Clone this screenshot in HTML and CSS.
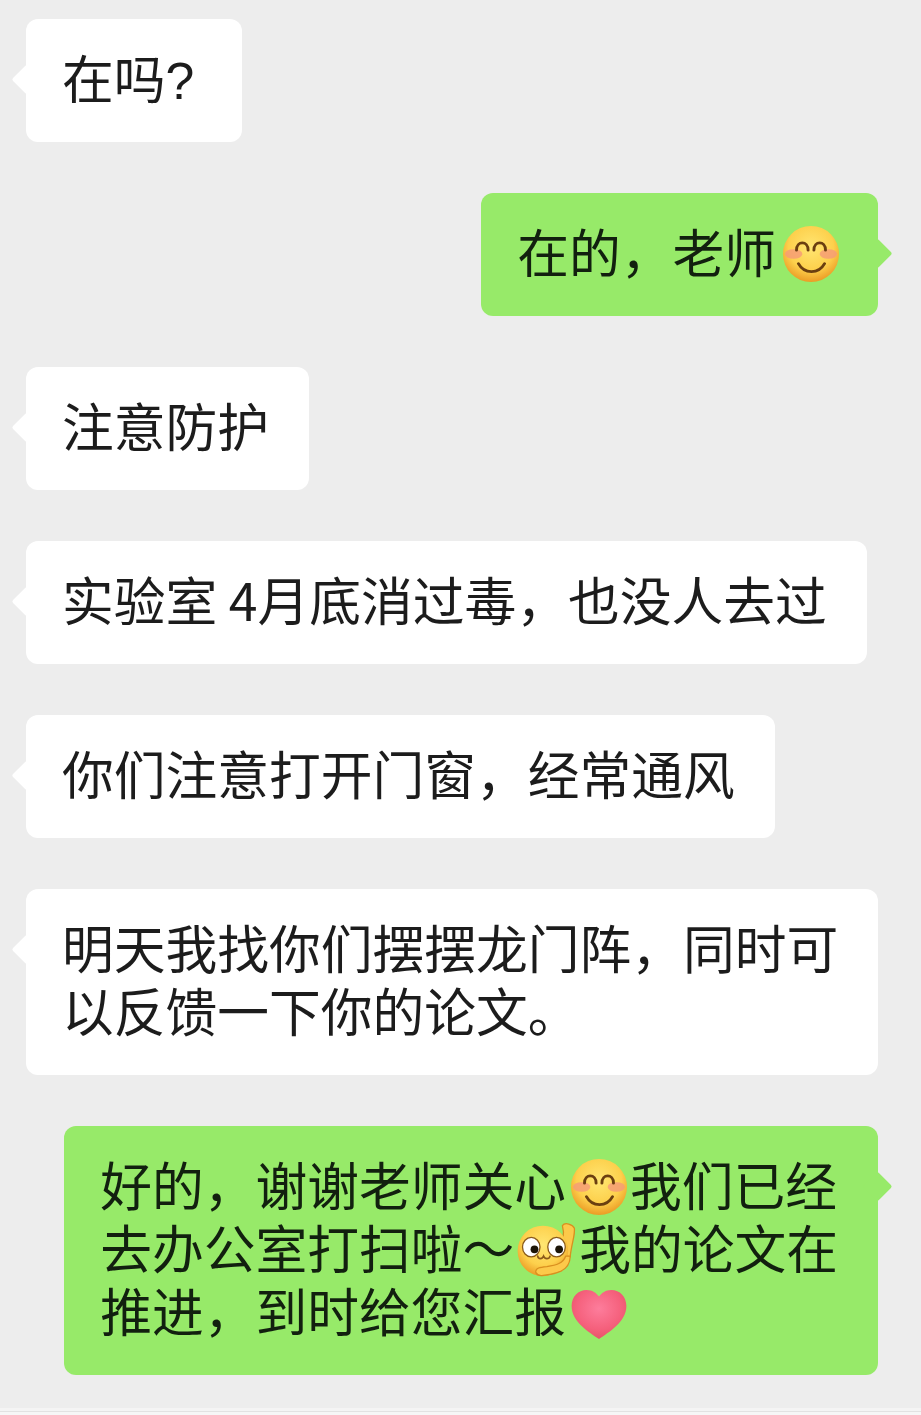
FILE: index.html
```html
<!DOCTYPE html>
<html lang="zh-CN">
<head>
    <meta charset="UTF-8">
    <title>聊天记录</title>
    <link rel="stylesheet" href="styles.css">
</head>
<body>
<svg class="defs" width="0" height="0">
    <defs>
        <radialGradient id="faceFill" cx="50%" cy="38%" r="62%">
            <stop offset="0" stop-color="#ffe672"/>
            <stop offset="0.65" stop-color="#fdd04c"/>
            <stop offset="1" stop-color="#eb9c25"/>
        </radialGradient>
        <radialGradient id="heartFill" cx="50%" cy="38%" r="60%">
            <stop offset="0" stop-color="#fd7d9c"/>
            <stop offset="0.7" stop-color="#f5607c"/>
            <stop offset="1" stop-color="#e8566a"/>
        </radialGradient>
        <symbol id="smile" viewBox="0 0 60 60">
            <circle cx="30" cy="30" r="29" fill="url(#faceFill)"/>
            <ellipse cx="12" cy="30" rx="9" ry="5" fill="#f59a78" opacity=".8"/>
            <ellipse cx="48" cy="30" rx="9" ry="5" fill="#f59a78" opacity=".8"/>
            <path d="M15 26c0-10 12-10 12 0M33 26c0-10 12-10 12 0M17 40c6 11 21 11 27 0" fill="none" stroke="#6b3f10" stroke-width="3" stroke-linecap="round"/>
        </symbol>
        <symbol id="think" viewBox="25 22 185 174">
            <path d="M168 34C176 22 200 30 205 42C208 62 196 90 192 130L150 120C170 90 176 60 168 34z" fill="#fcc94a" stroke="#d98f1f" stroke-width="4" stroke-linejoin="round"/>
            <circle cx="108" cy="112" r="78" fill="url(#faceFill)"/>
            <ellipse cx="72" cy="100" rx="27" ry="30" fill="#fff" stroke="#8a5a1a" stroke-width="4"/>
            <ellipse cx="150" cy="100" rx="27" ry="30" fill="#fff" stroke="#8a5a1a" stroke-width="4"/>
            <circle cx="82" cy="107" r="12" fill="#1c1508"/>
            <circle cx="158" cy="107" r="12" fill="#1c1508"/>
            <path d="M92 128c1 10 14 10 18 0c4 10 17 10 20 0" fill="none" stroke="#8a5a1a" stroke-width="5" stroke-linecap="round"/>
            <path d="M192 128C192 160 170 178 130 184C110 188 92 192 86 178C84 164 100 162 120 160C150 156 170 150 178 128z" fill="#fcc94a" stroke="#d98f1f" stroke-width="4" stroke-linejoin="round"/>
        </symbol>
        <symbol id="heart" viewBox="0 0 60 54">
            <path d="M30 53C20 46 1 35 1 18C1 8 8 1 17 1c6 0 10 3 13 7c3-4 7-7 13-7c9 0 16 7 16 17C59 35 40 46 30 53z" fill="url(#heartFill)"/>
        </symbol>
    </defs>
</svg>
<div class="chat">
    <div class="row">
        <div class="bubble">在吗<span class="latin">?</span></div>
    </div>
    <div class="row me">
        <div class="bubble">在的，老师<svg class="emoji"><use href="#smile"/></svg></div>
    </div>
    <div class="row">
        <div class="bubble">注意防护</div>
    </div>
    <div class="row">
        <div class="bubble">实验室 4月底消过毒，也没人去过</div>
    </div>
    <div class="row">
        <div class="bubble">你们注意打开门窗，经常通风</div>
    </div>
    <div class="row">
        <div class="bubble">明天我找你们摆摆龙门阵，同时可<br>以反馈一下你的论文。</div>
    </div>
    <div class="row me">
        <div class="bubble">好的，谢谢老师关心<svg class="emoji"><use href="#smile"/></svg>我们已经<br>去办公室打扫啦～<svg class="emoji think"><use href="#think"/></svg>我的论文在<br>推进，到时给您汇报<svg class="emoji heart"><use href="#heart"/></svg></div>
    </div>
</div>
<div class="edge"></div>
</body>
</html>
```

FILE: styles.css
```css
*{margin: 0;padding: 0;}
html,body{height: 100%;}
body{
    display: flex;
    flex-direction: column;
    background: #ededed;
    font-family: "Noto Sans CJK SC","Liberation Sans",sans-serif;
    overflow: hidden;
}
.defs{display: block;height: 0;}
.chat{
    flex: 1;
    display: flex;
    flex-direction: column;
    gap: 51px;
    padding: 19px 43px 0 26px;
}
.row{display: flex;}
.row.me{justify-content: flex-end;}
.bubble{
    position: relative;
    padding: 26px 40px 34px 36px;
    background: #fff;
    border-radius: 12px;
    color: #1c1c1c;
    font-size: 51.75px;
    line-height: 63px;
    white-space: nowrap;
}
.bubble::before{
    content: "";
    position: absolute;
    top: 50px;
    left: -10px;
    width: 21px;
    height: 21px;
    background: inherit;
    border-radius: 2px;
    transform: rotate(45deg);
}
.me .bubble{
    background: #97ea69;
    color: #12200f;
}
.me .bubble::before{
    left: auto;
    right: -10px;
}
.latin{
    padding-right: 8px;
    font-family: "Liberation Sans",sans-serif;
    line-height: 0;
}
.emoji{
    display: inline-block;
    width: 58px;
    height: 58px;
    margin: 0 2px -10px 4px;
}
.emoji:last-child{
    margin-left: 6px;
    margin-right: -2px;
}
.emoji.think{
    width: 60px;
    margin-left: 2px;
    margin-right: 3px;
}
.emoji.heart{
    height: 51px;
    margin: 0 0 -8px 4px;
}
.edge{
    height: 4px;
    border-top: 3px solid #f4f4f4;
    box-shadow: inset 0 1px 0 #e2e2e2;
    background: #f6f6f6;
}
```
